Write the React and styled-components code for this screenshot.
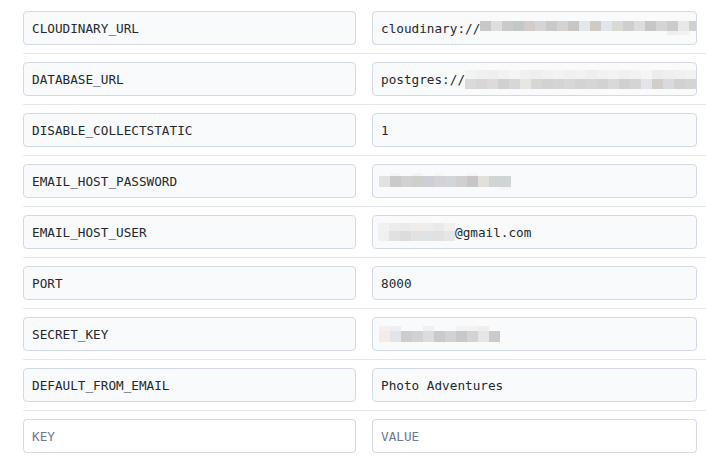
import styled, { createGlobalStyle } from "styled-components";

const GlobalStyle = createGlobalStyle`
  html, body {
    margin: 0;
    padding: 0;
    background: #fff;
    overflow: hidden;
  }
  body {
    font-family: "DejaVu Sans Mono", "Liberation Mono", monospace;
  }
`;

const List = styled.div`
  padding: 3px 0 0 23px;
`;

const Row = styled.div`
  display: grid;
  grid-template-columns: 333px 325px;
  column-gap: 16px;
  padding: 8px 0;
  border-bottom: 1px solid ${({ $last }) => ($last ? "transparent" : "#e4e7ec")};
`;

const Field = styled.div`
  box-sizing: border-box;
  height: 34px;
  display: flex;
  align-items: center;
  padding: 0 8px;
  border: 1px solid #d2d8e4;
  border-radius: 4px;
  background: ${({ $empty }) => ($empty ? "#ffffff" : "#f9fafc")};
  color: ${({ $empty }) => ($empty ? "#6c7a8e" : "#24292e")};
  font-size: 12.7px;
  white-space: nowrap;
  overflow: hidden;
`;

const Mosaic = styled.span`
  display: inline-flex;
  flex-direction: column;
  flex-shrink: 0;
  margin-left: ${({ $left }) => $left || 0}px;
`;

const Band = styled.span`
  display: flex;
  height: ${({ $h }) => $h}px;
`;

const Cell = styled.span`
  display: block;
  width: 11px;
  height: 100%;
`;

const Blur = ({ bands, left }) => (
  <Mosaic $left={left}>
    {bands.map((band, i) => (
      <Band key={i} $h={band.h}>
        {band.colors.map((c, j) => (
          <Cell key={j} style={{ background: c }} />
        ))}
      </Band>
    ))}
  </Mosaic>
);

const cloudinaryBlur = [
  {
    h: 10,
    colors: [
      "#c8c8c8", "#dedede", "#cacaca", "#c4c7c7", "#d2cdcb", "#d5d5d8",
      "#c9c9c9", "#d5d2d2", "#c6c6c6", "#e3e6eb", "#cfcac6", "#e1e5ec",
      "#d9d9d5", "#cecece", "#dcdcdc", "#c6c6c6", "#d4d4d4", "#cbcbcb",
      "#e8e8e8", "#d0d0d0",
    ],
  },
  {
    h: 4,
    colors: [
      "#f9fafc", "#f9fafc", "#f9fafc", "#f9fafc", "#f9fafc", "#f9fafc",
      "#f9fafc", "#f9fafc", "#f9fafc", "#f9fafc", "#f9fafc", "#f9fafc",
      "#f9fafc", "#f9fafc", "#f9fafc", "#f9fafc", "#f9fafc", "#eeeeef",
      "#f1f1f2", "#f9fafc",
    ],
  },
];

const postgresBlur = [
  {
    h: 9,
    colors: [
      "#f3f3f4", "#f0f0f1", "#eeeeef", "#f2f2f3", "#f5f5f6", "#f0f0f1",
      "#eeeeef", "#f1f1f2", "#f3f3f4", "#f0f0f1", "#f2f2f3", "#eeeeef",
      "#f1f1f2", "#f3f3f4", "#f0f0f1", "#f2f2f3", "#f5f5f6", "#ececed",
      "#eeeeef", "#f0f0f1", "#f2f2f3", "#f0f0f1",
    ],
  },
  {
    h: 10,
    colors: [
      "#dadada", "#d6d6d6", "#dcdadb", "#d0d0d0", "#d7d7d7", "#e6e6e3",
      "#d6d6d6", "#d2d2d2", "#d4d4d4", "#d8d8d8", "#d3d3d3", "#d6d6d6",
      "#d2d2d2", "#d9d9d9", "#d0d0d0", "#d4d4d4", "#e2e4e8", "#d0cdcb",
      "#d8dade", "#d0d0d0", "#d4d4d4", "#d6d6d6",
    ],
  },
];

const passwordBlur = [
  {
    h: 3,
    colors: [
      "#f9fafc", "#f5f5f6", "#f9fafc", "#f4f4f5", "#f9fafc", "#f6f6f7",
      "#f9fafc", "#f9fafc", "#f5f5f6", "#f9fafc", "#f9fafc", "#f9fafc",
    ],
  },
  {
    h: 11,
    colors: [
      "#e2e2e2", "#cacaca", "#d1d1d1", "#cdcfcb", "#cdcfd4", "#d3d3d7",
      "#d2d6d9", "#d2cfcf", "#c9c6ca", "#e2e0dc", "#d2d4d4", "#cfd4d6",
    ],
  },
  {
    h: 3,
    colors: [
      "#f9fafc", "#f9fafc", "#f9fafc", "#f9fafc", "#f9fafc", "#f9fafc",
      "#f9fafc", "#f9fafc", "#f9fafc", "#f9fafc", "#f9fafc", "#f5f5f6",
    ],
  },
];

const userBlur = [
  {
    h: 8,
    colors: ["#f1f1f2", "#ececec", "#ebebeb", "#efeceb", "#ededee", "#eaeaea", "#f0f0f0"],
  },
  {
    h: 10,
    colors: ["#f0f0f1", "#e0e1e3", "#dcdcdc", "#e2e2e2", "#e0e3e6", "#e1e1e2", "#e6e6e6"],
  },
];

const secretBlur = [
  {
    h: 5,
    colors: [
      "#f4f0ee", "#eceef2", "#f9fafc", "#f9fafc", "#f0f0f1", "#f9fafc",
      "#f9fafc", "#f3f3f4", "#f2f2f3", "#eeeeef", "#f9fafc",
    ],
  },
  {
    h: 11,
    colors: [
      "#f5ebe6", "#e2e4ea", "#cdcdcd", "#d2d2d2", "#dcdcdc", "#cacaca",
      "#d2d2d2", "#c8c8c8", "#d2d4d4", "#e6e6e6", "#cacaca",
    ],
  },
];

const rows = [
  { key: "CLOUDINARY_URL", value: "cloudinary://", blur: cloudinaryBlur },
  { key: "DATABASE_URL", value: "postgres://", blur: postgresBlur },
  { key: "DISABLE_COLLECTSTATIC", value: "1" },
  { key: "EMAIL_HOST_PASSWORD", blur: passwordBlur },
  { key: "EMAIL_HOST_USER", blurFirst: userBlur, value: "@gmail.com" },
  { key: "PORT", value: "8000" },
  { key: "SECRET_KEY", blur: secretBlur },
  { key: "DEFAULT_FROM_EMAIL", value: "Photo Adventures" },
];

export default function App() {
  return (
    <>
      <GlobalStyle />
      <List>
        {rows.map((row) => (
          <Row key={row.key}>
            <Field>{row.key}</Field>
            <Field>
              {row.blurFirst && <Blur bands={row.blurFirst} left={-3} />}
              {row.value}
              {row.blur && <Blur bands={row.blur} left={row.value ? 0 : -2} />}
            </Field>
          </Row>
        ))}
        <Row $last>
          <Field $empty>KEY</Field>
          <Field $empty>VALUE</Field>
        </Row>
      </List>
    </>
  );
}
